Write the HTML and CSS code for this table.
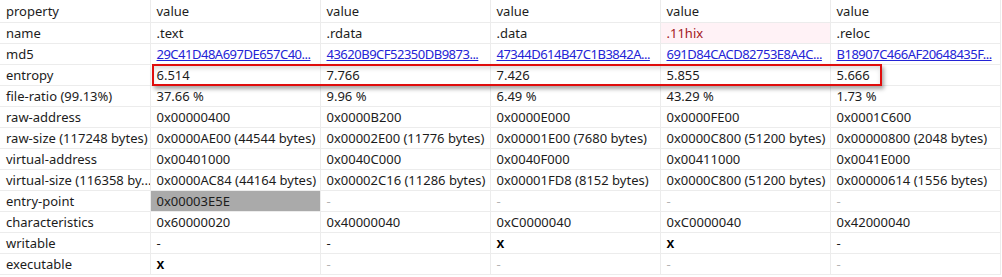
FILE: index.html
```html
<!DOCTYPE html>
<html>
<head>
<meta charset="utf-8">
<link rel="stylesheet" href="styles.css">
</head>
<body>
<div class="wrap">
<table class="grid">
<colgroup><col class="c-prop"><col class="c-val"><col class="c-val"><col class="c-val"><col class="c-val"><col class="c-val"></colgroup>
<thead>
<tr><th>property</th><th>value</th><th>value</th><th>value</th><th>value</th><th>value</th></tr>
</thead>
<tbody>
<tr><td>name</td><td>.text</td><td>.rdata</td><td>.data</td><td class="flag">.11hix</td><td>.reloc</td></tr>
<tr><td>md5</td><td><a class="link">29C41D48A697DE657C40...</a></td><td><a class="link">43620B9CF52350DB9873...</a></td><td><a class="link">47344D614B47C1B3842A...</a></td><td><a class="link">691D84CACD82753E8A4C...</a></td><td><a class="link">B18907C466AF20648435F...</a></td></tr>
<tr><td>entropy</td><td>6.514</td><td>7.766</td><td>7.426</td><td>5.855</td><td>5.666</td></tr>
<tr><td>file-ratio (99.13%)</td><td>37.66 %</td><td>9.96 %</td><td>6.49 %</td><td>43.29 %</td><td>1.73 %</td></tr>
<tr><td>raw-address</td><td>0x00000400</td><td>0x0000B200</td><td>0x0000E000</td><td>0x0000FE00</td><td>0x0001C600</td></tr>
<tr><td>raw-size (117248 bytes)</td><td>0x0000AE00 (44544 bytes)</td><td>0x00002E00 (11776 bytes)</td><td>0x00001E00 (7680 bytes)</td><td>0x0000C800 (51200 bytes)</td><td>0x00000800 (2048 bytes)</td></tr>
<tr><td>virtual-address</td><td>0x00401000</td><td>0x0040C000</td><td>0x0040F000</td><td>0x00411000</td><td>0x0041E000</td></tr>
<tr><td>virtual-size (116358 by...</td><td>0x0000AC84 (44164 bytes)</td><td>0x00002C16 (11286 bytes)</td><td>0x00001FD8 (8152 bytes)</td><td>0x0000C800 (51200 bytes)</td><td>0x00000614 (1556 bytes)</td></tr>
<tr><td>entry-point</td><td class="ep">0x00003E5E</td><td class="na">-</td><td class="na">-</td><td class="na">-</td><td class="na">-</td></tr>
<tr><td>characteristics</td><td>0x60000020</td><td>0x40000040</td><td>0xC0000040</td><td>0xC0000040</td><td>0x42000040</td></tr>
<tr><td>writable</td><td>-</td><td>-</td><td class="mark">x</td><td class="mark">x</td><td>-</td></tr>
<tr><td>executable</td><td class="mark">x</td><td class="na">-</td><td class="na">-</td><td class="na">-</td><td class="na">-</td></tr>
</tbody>
</table>
<div class="highlight"></div>
</div>
</body>
</html>
```
FILE: styles.css
```css
html, body {
  margin: 0;
  padding: 0;
  background: #ffffff;
}
body {
  font-family: "Noto Sans", "Open Sans", "Noto Sans CJK SC", sans-serif;
  font-size: 13px;
  color: #1c1c1c;
}
.wrap {
  position: relative;
  width: 1002px;
  height: 277px;
  overflow: hidden;
}
.grid {
  border-collapse: collapse;
  table-layout: fixed;
  width: 1000px;
}
.c-prop { width: 150px; }
.c-val { width: 170px; }
.grid th, .grid td {
  text-align: left;
  font-weight: normal;
  padding: 0 0 0 6px;
  white-space: nowrap;
  overflow: hidden;
  border-right: 1px solid #ececec;
  border-bottom: 1px solid #ececec;
  line-height: 20px;
  height: 20px;
}
.grid th {
  height: 22px;
  line-height: 22px;
}
.link {
  color: #2323d6;
  text-decoration: underline;
  letter-spacing: -0.5px;
}
.flag {
  background: #fff2f6;
  color: #a3171c;
}
.ep {
  background: #aaaaaa;
}
.na {
  color: #b3b3b3;
}
.grid td.mark {
  font-family: "Liberation Sans", "DejaVu Sans", sans-serif;
  font-weight: bold;
  font-size: 14px;
  color: #000000;
}
.highlight {
  position: absolute;
  left: 152px;
  top: 64px;
  width: 726px;
  height: 18px;
  border: 2px solid #e00d0d;
  box-shadow: 2px 3px 4px rgba(0, 0, 0, 0.35), inset 0 3px 4px rgba(0, 0, 0, 0.12);
}
```
